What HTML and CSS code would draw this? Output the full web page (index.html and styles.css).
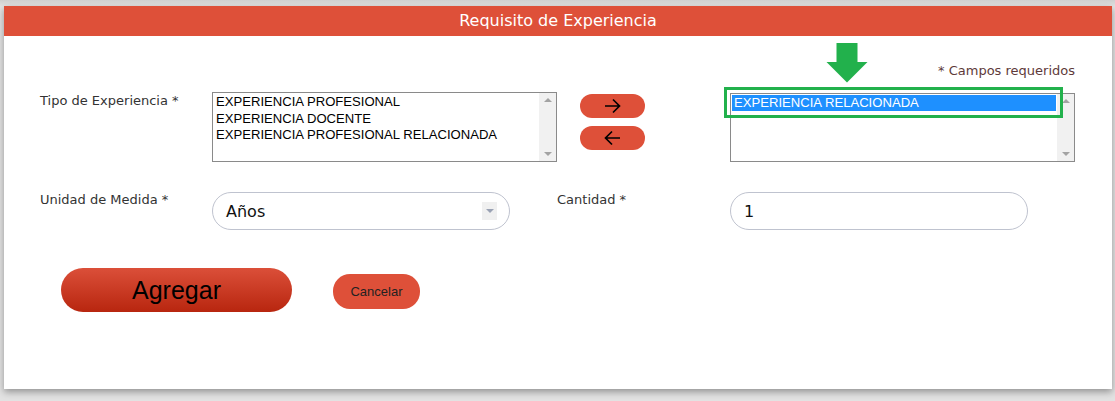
FILE: index.html
```html
<!DOCTYPE html>
<html lang="es">
<head>
<meta charset="utf-8">
<title>Requisito de Experiencia</title>
<link rel="stylesheet" href="styles.css">
</head>
<body>
<div class="panel">
  <div class="panel-header">Requisito de Experiencia</div>
  <div class="panel-body">
    <div class="req-note">* Campos requeridos</div>

    <div class="row row-types">
      <div class="label">Tipo de Experiencia *</div>
      <div class="listbox">
        <div class="list-items">
          <div class="opt">EXPERIENCIA PROFESIONAL</div>
          <div class="opt">EXPERIENCIA DOCENTE</div>
          <div class="opt">EXPERIENCIA PROFESIONAL RELACIONADA</div>
        </div>
        <div class="scrollbar"><span class="tri-up"></span><span class="tri-down"></span></div>
      </div>
      <div class="move-buttons">
        <button class="move-btn" type="button" aria-label="Agregar">
          <svg width="17" height="16" viewBox="0 0 17 16"><path d="M1 8H15.5M9 1.5L15.5 8L9 14.5" fill="none" stroke="#000" stroke-width="1.7"/></svg>
        </button>
        <button class="move-btn" type="button" aria-label="Quitar">
          <svg width="17" height="16" viewBox="0 0 17 16"><path d="M16 8H1.5M8 1.5L1.5 8L8 14.5" fill="none" stroke="#000" stroke-width="1.7"/></svg>
        </button>
      </div>
      <div class="listbox listbox-right">
        <div class="list-items">
          <div class="opt opt-selected">EXPERIENCIA RELACIONADA</div>
        </div>
        <div class="scrollbar"><span class="tri-up"></span><span class="tri-down"></span></div>
        <div class="highlight-box"></div>
        <svg class="green-arrow" width="42" height="40" viewBox="0 0 42 40"><path d="M10.5 0H31.5V19H41.5L21 39.5L0.5 19H10.5Z" fill="#22b14c"/></svg>
      </div>
    </div>

    <div class="row row-fields">
      <div class="label">Unidad de Medida *</div>
      <div class="pill-field select-field">
        <span class="field-text">Años</span>
        <span class="dd-arrow"><span class="dd-tri"></span></span>
      </div>
      <div class="label label-cant">Cantidad *</div>
      <div class="pill-field">
        <span class="field-text">1</span>
      </div>
    </div>

    <div class="row row-actions">
      <button class="btn-agregar" type="button">Agregar</button>
      <button class="btn-cancelar" type="button">Cancelar</button>
    </div>
  </div>
</div>
</body>
</html>
```
FILE: styles.css
```css
html, body {
  margin: 0;
  padding: 0;
}
body {
  background: linear-gradient(#cfcfcf, #e2e2e2 6px, #e2e2e2);
  padding: 6px 0 0 4px;
  height: 401px;
  box-sizing: border-box;
  overflow: hidden;
  font-family: "DejaVu Sans", Verdana, sans-serif;
}
.panel {
  width: 1108px;
  height: 383px;
  background: #fff;
  box-shadow: 0 3px 7px rgba(0, 0, 0, 0.35);
  position: relative;
}
.panel-header {
  height: 30px;
  background: #de5039;
  color: #fff;
  font-size: 16px;
  line-height: 30px;
  text-align: center;
}
.panel-body {
  padding: 26px 37px 0 36px;
}
.req-note {
  text-align: right;
  font-size: 13px;
  line-height: 18px;
  color: #5e3a3a;
}
.row {
  display: flex;
  align-items: flex-start;
}
.row-types {
  margin-top: 12px;
}
.label {
  width: 172px;
  font-size: 13px;
  line-height: 16px;
  color: #333;
  padding-top: 1px;
}
.listbox {
  width: 345px;
  height: 70px;
  box-sizing: border-box;
  border: 1px solid #8a8a8a;
  display: flex;
  position: relative;
  background: #fff;
}
.list-items {
  flex: 1;
  padding: 1px 2px 0 3px;
}
.opt {
  font-family: "Liberation Sans", Arial, sans-serif;
  font-size: 13.1px;
  line-height: 16.5px;
  color: #000;
  white-space: nowrap;
}
.scrollbar {
  width: 17px;
  background: #f1f1f1;
  position: relative;
}
.tri-up, .tri-down {
  position: absolute;
  left: 5px;
  width: 0;
  height: 0;
  border-left: 4px solid transparent;
  border-right: 4px solid transparent;
}
.tri-up {
  top: 5px;
  border-bottom: 4px solid #a3a3a3;
}
.tri-down {
  bottom: 5px;
  border-top: 4px solid #a3a3a3;
}
.move-buttons {
  margin-left: 23px;
  padding-top: 2px;
  display: flex;
  flex-direction: column;
  gap: 8px;
}
.move-btn {
  width: 65px;
  height: 24px;
  border: none;
  border-radius: 12px;
  background: #de5039;
  padding: 0;
  display: flex;
  align-items: center;
  justify-content: center;
}
.listbox-right {
  margin-left: 85px;
  margin-top: 1px;
  height: 69px;
}
.listbox-right .list-items {
  padding: 1px 1px 0 1px;
}
.opt-selected {
  background: #1e90ff;
  color: #fff;
  padding-left: 2px;
  line-height: 16px;
}
.highlight-box {
  position: absolute;
  left: -7px;
  top: -7px;
  width: 339px;
  height: 31px;
  box-sizing: border-box;
  border: 3px solid #22b14c;
}
.green-arrow {
  position: absolute;
  left: 95px;
  top: -51px;
}
.row-fields {
  margin-top: 30px;
}
.row-fields .label {
  padding-top: 0;
}
.pill-field {
  width: 298px;
  height: 38px;
  box-sizing: border-box;
  border: 1px solid #bfc3cf;
  border-radius: 19px;
  display: flex;
  align-items: center;
  padding-left: 13px;
  position: relative;
}
.field-text {
  font-size: 16px;
  color: #111;
  flex: 1;
}
.label-cant {
  width: 173px;
  margin-left: 47px;
}
.dd-arrow {
  width: 15px;
  height: 18px;
  background: #f0f0f0;
  margin-right: 12px;
  display: flex;
  align-items: center;
  justify-content: center;
}
.dd-tri {
  width: 0;
  height: 0;
  border-left: 4px solid transparent;
  border-right: 4px solid transparent;
  border-top: 4px solid #9aa2b4;
}
.row-actions {
  margin-top: 38px;
  padding-left: 21px;
  align-items: flex-start;
}
.btn-agregar {
  width: 231px;
  height: 44px;
  border: none;
  border-radius: 22px;
  background: linear-gradient(#db4f39, #b8260f);
  color: #000;
  font-family: "Liberation Sans", Arial, sans-serif;
  font-size: 25px;
  padding: 0;
}
.btn-cancelar {
  margin-left: 41px;
  margin-top: 6px;
  width: 87px;
  height: 35px;
  border: none;
  border-radius: 17px;
  background: #de5039;
  color: #222;
  font-family: "Liberation Sans", Arial, sans-serif;
  font-size: 13px;
  padding: 0;
}
```
